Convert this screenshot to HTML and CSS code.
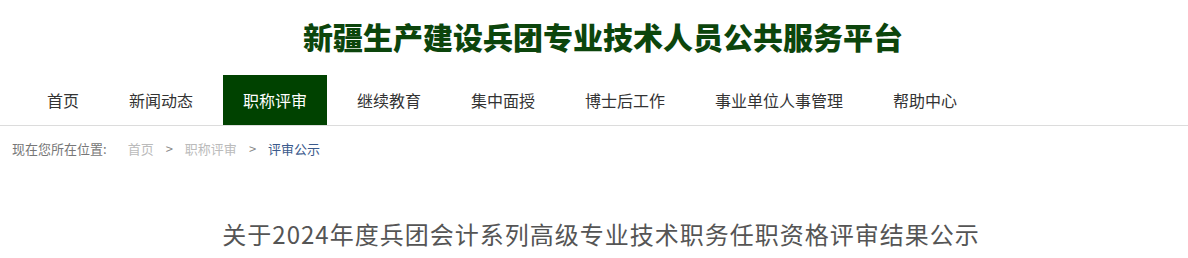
FILE: index.html
```html
<!DOCTYPE html>
<html lang="zh-CN">
<head>
<meta charset="utf-8">
<title>新疆生产建设兵团专业技术人员公共服务平台</title>
<link rel="stylesheet" href="styles.css">
</head>
<body>
<header class="header">
  <h1 class="site-title">新疆生产建设兵团专业技术人员公共服务平台</h1>
</header>
<nav class="nav">
  <ul class="nav-list">
    <li class="nav-item">首页</li>
    <li class="nav-item">新闻动态</li>
    <li class="nav-item active">职称评审</li>
    <li class="nav-item">继续教育</li>
    <li class="nav-item">集中面授</li>
    <li class="nav-item">博士后工作</li>
    <li class="nav-item">事业单位人事管理</li>
    <li class="nav-item">帮助中心</li>
  </ul>
</nav>
<div class="crumbs">
  <span class="crumb-label">现在您所在位置:</span>
  <span class="crumb-link">首页</span>
  <span class="crumb-sep">&gt;</span>
  <span class="crumb-link">职称评审</span>
  <span class="crumb-sep">&gt;</span>
  <span class="crumb-current">评审公示</span>
</div>
<main class="article">
  <h2 class="article-title">关于2024年度兵团会计系列高级专业技术职务任职资格评审结果公示</h2>
</main>
</body>
</html>
```
FILE: styles.css
```css
* { box-sizing: border-box; }
html, body { margin: 0; padding: 0; background: #fff; }
body {
  font-family: "Noto Sans CJK SC", "Noto Sans", sans-serif;
  color: #333;
}
.header {
  height: 75px;
  padding-top: 21px;
  text-align: center;
}
.site-title {
  margin: 0;
  padding-left: 18px;
  font-size: 30px;
  line-height: 30px;
  font-weight: 900;
  color: #0c450c;
  letter-spacing: 0;
}
.nav {
  border-bottom: 1px solid #dcdcdc;
}
.nav-list {
  display: flex;
  gap: 10px;
  margin: 0;
  padding: 0 0 0 27px;
  list-style: none;
}
.nav-item {
  height: 50px;
  line-height: 50px;
  padding: 0 20px;
  font-size: 16px;
  color: #333;
  white-space: nowrap;
}
.nav-item.active {
  background: #004200;
  color: #fff;
}
.crumbs {
  display: flex;
  align-items: center;
  height: 24px;
  margin-top: 11px;
  padding-left: 12px;
  font-size: 13px;
  line-height: 24px;
}
.crumb-label { color: #777; margin-right: 21px; }
.crumb-link { color: #bbb; }
.crumb-sep { color: #888; margin: 0 12px; }
.crumb-current { color: #3b5a8c; }
.article {
  margin-top: 55px;
  text-align: center;
}
.article-title {
  margin: 0;
  padding-left: 14px;
  font-size: 24px;
  line-height: 36px;
  font-weight: 400;
  letter-spacing: 1px;
  color: #555;
}
```
